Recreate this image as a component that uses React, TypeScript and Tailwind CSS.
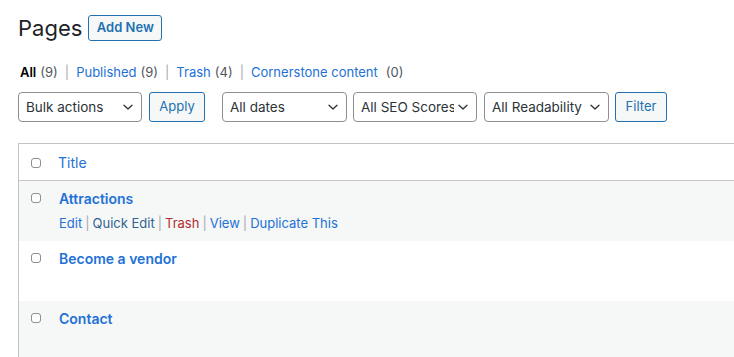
import React from "react";

const Chevron = () => (
  <svg width="12" height="12" viewBox="0 0 12 12" fill="none" className="shrink-0">
    <path d="M2 4.2 L6 8 L10 4.2" stroke="#2c3338" strokeWidth="1.3" strokeLinecap="round" strokeLinejoin="round" />
  </svg>
);

function Select({ label, w }: { label: string; w: string }) {
  return (
    <div
      className={`flex h-[30px] items-center justify-between gap-[3px] rounded-[4px] border border-[#8c8f94] bg-white pl-[7px] pr-[7px] text-[13.5px] text-[#2c3338] ${w}`}
    >
      <span className="overflow-hidden whitespace-nowrap">{label}</span>
      <Chevron />
    </div>
  );
}

function Btn({ label, w }: { label: string; w: string }) {
  return (
    <div
      className={`flex h-[30px] items-center justify-center rounded-[3px] border border-[#2271b1] bg-[#f6f7f7] text-[13px] text-[#2271b1] ${w}`}
    >
      {label}
    </div>
  );
}

const Box = () => (
  <div className="mt-[2px] h-[10px] w-[10px] shrink-0 rounded-[3px] border border-[#8c8f94] bg-white" />
);

const Sep = () => <span className="mx-[7px] text-[#a7aaad]">|</span>;

const rows = [
  { title: "Attractions", gray: true, actions: true },
  { title: "Become a vendor", gray: false, actions: false },
  { title: "Contact", gray: true, actions: false },
];

export default function App() {
  return (
    <div
      className="h-[357px] w-[734px] overflow-hidden bg-white pl-[18px] text-[#2c3338]"
      style={{ fontFamily: "Inter, 'Noto Sans', sans-serif" }}
    >
      <div className="flex items-center pt-[15px]">
        <h1 className="text-[22px] leading-[26px] font-normal text-[#1d2327]">Pages</h1>
        <div className="ml-[6px] flex h-[26px] w-[74px] items-center justify-center rounded-[3px] border border-[#2271b1] bg-[#f6f7f7] text-[13px] font-semibold text-[#2271b1]">
          Add New
        </div>
      </div>

      <div className="mt-[22px] flex items-center pl-[2px] text-[13px] leading-[18px] text-[#50575e]">
        <span className="font-semibold text-black">All</span>
        <span className="ml-[4px]">(9)</span>
        <Sep />
        <span className="text-[#2271d6]">Published</span>
        <span className="ml-[4px]">(9)</span>
        <Sep />
        <span className="text-[#2271d6]">Trash</span>
        <span className="ml-[4px]">(4)</span>
        <Sep />
        <span className="text-[#2271d6]">Cornerstone content</span>
        <span className="ml-[8px]">(0)</span>
      </div>

      <div className="mt-[11px] flex items-center">
        <Select label="Bulk actions" w="w-[124px]" />
        <div className="ml-[7px]">
          <Btn label="Apply" w="w-[56px]" />
        </div>
        <div className="ml-[17px]">
          <Select label="All dates" w="w-[125px]" />
        </div>
        <div className="ml-[6px]">
          <Select label="All SEO Scores" w="w-[124px]" />
        </div>
        <div className="ml-[7px]">
          <Select label="All Readability" w="w-[125px]" />
        </div>
        <div className="ml-[6px]">
          <Btn label="Filter" w="w-[52px]" />
        </div>
      </div>

      <div className="mt-[21px] w-[800px] border-l border-t border-[#c3c4c7]">
        <div className="flex h-[37px] items-center border-b border-[#c3c4c7] pl-[12px]">
          <Box />
          <span className="ml-[17px] text-[14px] text-[#2271d6]">Title</span>
        </div>
        {rows.map((r) => (
          <div
            key={r.title}
            className={`flex h-[60px] items-start pl-[12px] pt-[10px] ${r.gray ? "bg-[#f6f7f7]" : "bg-white"}`}
          >
            <Box />
            <div className="ml-[18px] flex flex-col">
              <span className="text-[14px] leading-[16px] font-semibold text-[#2271d6]">{r.title}</span>
              {r.actions && (
                <div className="mt-[8px] flex text-[13px] leading-[16px] text-[#2271d6]">
                  <span>Edit</span>
                  <span className="mx-[3px] text-[#a7aaad]">|</span>
                  <span className="text-[#30648f]">Quick Edit</span>
                  <span className="mx-[3px] text-[#a7aaad]">|</span>
                  <span className="text-[#b32d2e]">Trash</span>
                  <span className="mx-[3px] text-[#a7aaad]">|</span>
                  <span>View</span>
                  <span className="mx-[3px] text-[#a7aaad]">|</span>
                  <span>Duplicate This</span>
                </div>
              )}
            </div>
          </div>
        ))}
      </div>
    </div>
  );
}
